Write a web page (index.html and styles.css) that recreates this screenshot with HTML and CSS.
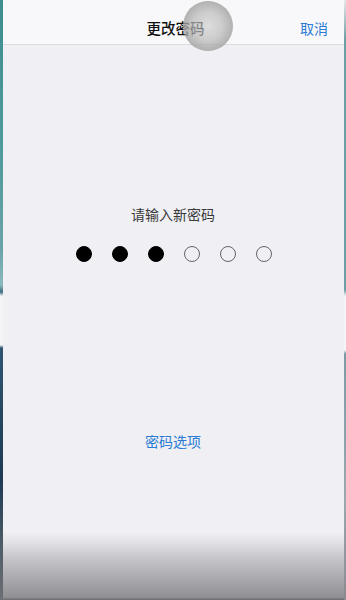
FILE: index.html
```html
<!DOCTYPE html>
<html lang="zh-CN">
<head>
<meta charset="utf-8">
<title>更改密码</title>
<link rel="stylesheet" href="styles.css">
</head>
<body>
<div class="frame">
  <div class="edge edge-left"></div>
  <div class="screen">
    <header class="navbar">
      <span class="nav-title">更改密码</span>
      <span class="nav-cancel">取消</span>
      <span class="touch"></span>
    </header>
    <main class="content">
      <p class="prompt">请输入新密码</p>
      <div class="dots">
        <span class="dot filled"></span>
        <span class="dot filled"></span>
        <span class="dot filled"></span>
        <span class="dot"></span>
        <span class="dot"></span>
        <span class="dot"></span>
      </div>
      <p class="options">密码选项</p>
    </main>
    <div class="keyboard-shade"></div>
  </div>
  <div class="edge edge-right"></div>
</div>
</body>
</html>
```
FILE: styles.css
```css
* { box-sizing: border-box; }
html, body {
  margin: 0;
  padding: 0;
  width: 346px;
  height: 600px;
  overflow: hidden;
  font-family: "Noto Sans CJK SC", "Noto Sans", sans-serif;
}
.frame {
  display: flex;
  width: 346px;
  height: 600px;
}
.edge { flex: none; }
.edge-left {
  width: 3px;
  background: linear-gradient(to bottom, #3f8d8f 0px, #4f9a9c 150px, #6aa3a8 250px, #8ab9bd 285px, #3f6d80 292px, #f4f4f6 296px, #f4f4f6 345px, #2f5570 348px, #1e3a55 480px, #4a5a66 540px, #6d6f74 600px);
}
.edge-right {
  width: 2px;
  background: linear-gradient(to bottom, #e8e8ec 0px, #6d9ea3 40px, #6f9ea6 290px, #f4f4f6 296px, #f4f4f6 350px, #7f9aa5 354px, #9aa8b0 500px, #8a8a90 600px);
}
.screen {
  position: relative;
  flex: 1;
  display: flex;
  flex-direction: column;
  background: #efeff4;
}
.navbar {
  position: relative;
  height: 45px;
  flex: none;
  background: #f8f8fa;
  border-bottom: 1px solid #dcdce0;
  display: flex;
  align-items: center;
  justify-content: center;
}
.nav-title {
  font-size: 14.5px;
  font-weight: 500;
  color: #111;
  margin-top: 10px;
  margin-left: 4px;
}
.nav-cancel {
  position: absolute;
  right: 16px;
  top: 18px;
  font-size: 14px;
  line-height: 20px;
  color: #2a7bd3;
}
.touch {
  position: absolute;
  left: 180px;
  top: 1px;
  width: 50px;
  height: 50px;
  border-radius: 50%;
  background: radial-gradient(circle at 50% 50%, rgba(200,200,200,0.55) 0%, rgba(185,185,185,0.7) 40%, rgba(160,160,160,0.8) 70%, rgba(140,140,140,0.85) 95%, rgba(140,140,140,0.6) 100%);
}
.content {
  flex: 1;
  display: flex;
  flex-direction: column;
  align-items: center;
  padding-top: 159px;
  margin-left: -1px;
}
.prompt {
  margin: 0;
  font-size: 14px;
  line-height: 20px;
  color: #3a3a3a;
}
.dots {
  display: flex;
  gap: 20px;
  margin-top: 22px;
  margin-left: 2px;
}
.dot {
  width: 16px;
  height: 16px;
  border-radius: 50%;
  border: 1.3px solid #666;
  background: transparent;
}
.dot.filled {
  background: #000;
  border-color: #000;
}
.options {
  margin: 169px 0 0;
  font-size: 14px;
  line-height: 20px;
  color: #2a7bd3;
}
.keyboard-shade {
  position: absolute;
  left: 0;
  right: 0;
  bottom: 0;
  height: 68px;
  background: linear-gradient(to bottom, #efeff4 0%, #e2e2e6 15%, #c4c4c8 40%, #a8a8ad 70%, #8f8f94 96%, #6a6a6e 100%);
}
```
